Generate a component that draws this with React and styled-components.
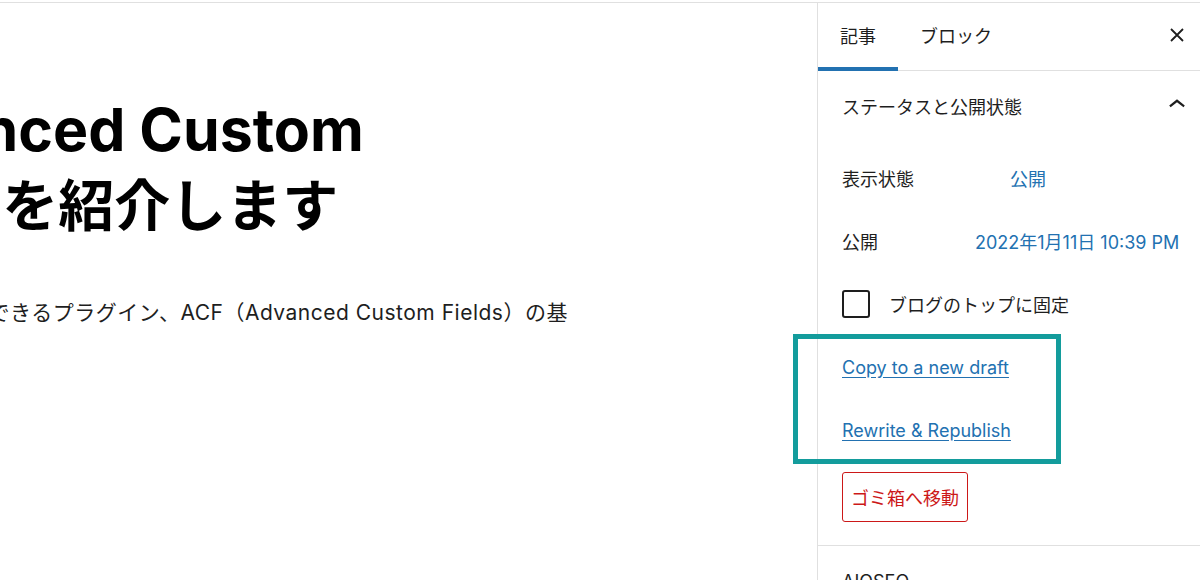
import React from "react";
import styled, { createGlobalStyle } from "styled-components";

const GlobalStyle = createGlobalStyle`
  html, body {
    margin: 0;
    padding: 0;
    background: #fff;
  }
  body {
    font-family: Inter, "Noto Sans CJK JP", sans-serif;
    color: #1e1e1e;
    -webkit-font-smoothing: antialiased;
  }
`;

const CloseIcon = () => (
  <svg width="14" height="14" viewBox="0 0 14 14" stroke="#1e1e1e" strokeWidth="1.8" fill="none">
    <path d="M1 1l12 12M13 1L1 13" />
  </svg>
);

const ChevronUp = () => (
  <svg width="34" height="34" viewBox="0 0 24 24" fill="#1e1e1e">
    <path d="M6.5 12.4L12 8l5.5 4.4-.9 1.2L12 10l-4.5 3.6-1-1.2z" />
  </svg>
);

export default function App() {
  return (
    <>
      <GlobalStyle />
      <Page>
        <Workspace>
          <Canvas>
            <Title>
              <TitleLine $shift={168} $size={59}>Advanced Custom</TitleLine>
              <TitleLine $shift={385} $size={56}>Fieldsの使い方を紹介します</TitleLine>
            </Title>
            <Lead $shift={183}>
              フィールドを追加できるプラグイン、ACF（Advanced Custom Fields）の基
            </Lead>
          </Canvas>

          <Sidebar>
            <TabBar>
              <Tab $active>記事</Tab>
              <Tab>ブロック</Tab>
              <IconButton aria-label="閉じる">
                <CloseIcon />
              </IconButton>
            </TabBar>

            <Panel>
              <PanelHeader>
                ステータスと公開状態
                <ChevronUp />
              </PanelHeader>
              <PanelBody>
                <Row>
                  <Label $width={168}>表示状態</Label>
                  <Value>公開</Value>
                </Row>
                <Row>
                  <Label $width={133}>公開</Label>
                  <Value>2022年1月11日 10:39 PM</Value>
                </Row>
                <Row>
                  <Checkbox />
                  <CheckLabel>ブログのトップに固定</CheckLabel>
                </Row>
                <Row>
                  <TextLink href="#">Copy to a new draft</TextLink>
                </Row>
                <Row>
                  <TextLink href="#">Rewrite &amp; Republish</TextLink>
                </Row>
                <TrashButton>ゴミ箱へ移動</TrashButton>
              </PanelBody>
            </Panel>

            <Panel>
              <PanelHeader>AIOSEO</PanelHeader>
            </Panel>
          </Sidebar>
        </Workspace>

        <Highlight />
      </Page>
    </>
  );
}

const Page = styled.div`
  position: relative;
  height: 580px;
  overflow: hidden;
  padding-top: 2px;
  box-sizing: border-box;
`;

const Workspace = styled.div`
  display: flex;
  height: 100%;
  border-top: 1px solid #e0e0e0;
`;

const Canvas = styled.main`
  flex: 1;
  overflow: hidden;
  padding-top: 89px;
  color: #000;
`;

const Title = styled.h1`
  margin: 0;
  font-weight: 700;
  line-height: 76px;
  white-space: nowrap;
`;

const TitleLine = styled.div`
  margin-left: ${(p) => -p.$shift}px;
  font-size: ${(p) => p.$size}px;
`;

const Lead = styled.p`
  margin: 53px 0 0 ${(p) => -p.$shift}px;
  font-size: 21px;
  line-height: 32px;
  letter-spacing: 0.5px;
  white-space: nowrap;
  color: #1e1e1e;
`;

const Sidebar = styled.aside`
  width: 382px;
  flex-shrink: 0;
  border-left: 1px solid #e0e0e0;
  display: flex;
  flex-direction: column;

  & > * {
    flex-shrink: 0;
  }
`;

const TabBar = styled.div`
  display: flex;
  align-items: stretch;
  height: 67px;
  border-bottom: 1px solid #e0e0e0;
`;

const Tab = styled.div`
  display: flex;
  align-items: center;
  padding: 0 22px 4px;
  font-size: 18px;
  color: #1e1e1e;
  box-shadow: ${(p) => (p.$active ? "inset 0 -4px 0 #2271b1" : "none")};
  margin-bottom: -1px;
`;

const IconButton = styled.button`
  margin-left: auto;
  border: 0;
  background: none;
  padding: 0 16px 4px 0;
  display: flex;
  align-items: center;
  cursor: pointer;
`;

const Panel = styled.section`
  border-bottom: 1px solid #e0e0e0;
`;

const PanelHeader = styled.div`
  display: flex;
  align-items: center;
  justify-content: space-between;
  height: 70px;
  padding: 0 6px 0 24px;
  font-size: 18px;
  color: #1e1e1e;

  svg {
    margin-top: -2px;
  }
`;

const PanelBody = styled.div`
  display: flex;
  flex-direction: column;
  align-items: flex-start;
  gap: 23px;
  padding: 17px 24px 23px;
`;

const Row = styled.div`
  display: flex;
  align-items: center;
  height: 40px;
  font-size: 18px;
  white-space: nowrap;
`;

const Label = styled.span`
  width: ${(p) => p.$width}px;
  color: #1e1e1e;
`;

const Value = styled.span`
  color: #2271b1;
`;

const Checkbox = styled.span`
  width: 28px;
  height: 28px;
  box-sizing: border-box;
  border: 2px solid #1e1e1e;
  border-radius: 3px;
  margin-right: 19px;
`;

const CheckLabel = styled.span`
  color: #1e1e1e;
`;

const TextLink = styled.a`
  color: #2271b1;
  text-decoration: underline;
  text-underline-offset: 3px;
`;

const TrashButton = styled.button`
  height: 50px;
  margin-top: -1px;
  padding: 0 8px;
  border: 1px solid #cc1818;
  border-radius: 3px;
  background: #fff;
  color: #cc1818;
  font-family: inherit;
  font-size: 18px;
`;

/* callout frame drawn over the duplicate-post links */
const Highlight = styled.div`
  position: absolute;
  left: 793px;
  top: 334px;
  width: 268px;
  height: 130px;
  box-sizing: border-box;
  border: 5px solid #139c9c;
  pointer-events: none;
`;
